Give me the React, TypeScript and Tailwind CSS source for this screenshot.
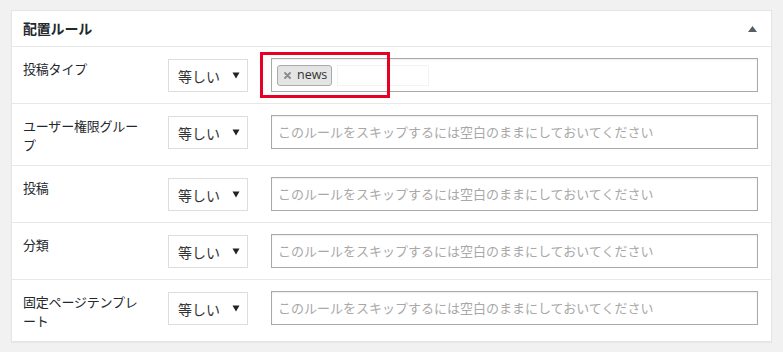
import React from "react";

const JP = "font-['Noto_Sans_CJK_JP','Noto_Sans',sans-serif]";
const PH = "このルールをスキップするには空白のままにしておいてください";

function Select() {
  return (
    <div className="mt-[1px] flex h-[33px] w-[80px] shrink-0 items-center justify-between border border-[#dddddd] bg-white pl-[9px] pr-[6px]">
      <span className="text-[14px] leading-none text-[#333]">等しい</span>
      <svg width="8" height="7" viewBox="0 0 8 7" className="mr-[1px]">
        <path d="M0.5 0.5 H7.5 L4 6.5 Z" fill="#222" />
      </svg>
    </div>
  );
}

function Row({ label, children }: { label: React.ReactNode; children: React.ReactNode }) {
  return (
    <div className="flex items-start border-t border-[#e8e8e8] pl-[11px] pr-[13px] pt-[11px] pb-[11px]">
      <div className="mt-[2px] w-[145px] shrink-0 pr-[10px] text-[13px] leading-[18.5px] tracking-[-0.2px] text-[#23282d]">
        {label}
      </div>
      <Select />
      <div className="ml-[23px] flex-1">{children}</div>
    </div>
  );
}

function EmptyInput() {
  return (
    <div className="flex h-[34px] items-center border border-[#a9a9a9] bg-white pl-[6px] shadow-[inset_0_1px_2px_rgba(0,0,0,0.07)]">
      <span className="text-[13px] tracking-[0px] text-[#a8a8a8]">{PH}</span>
    </div>
  );
}

export default function App() {
  return (
    <div className={`h-[352px] w-[783px] bg-[#f1f1f1] pl-[11px] pt-[10px] ${JP}`}>
      <div className="w-[761px] border border-[#e5e5e5] bg-white shadow-[0_1px_1px_rgba(0,0,0,0.04)]">
        <div className="flex h-[35px] items-center justify-between pl-[11px] pr-[14px]">
          <span className="text-[14px] font-bold tracking-[-0.2px] text-[#23282d]">配置ルール</span>
          <svg width="9" height="6" viewBox="0 0 9 6">
            <path d="M0 6 L4.5 0 L9 6 Z" fill="#555d66" />
          </svg>
        </div>
        <Row label="投稿タイプ">
          <div className="relative">
            <div className="flex h-[34px] items-center gap-[5px] border border-[#a9a9a9] bg-white pl-[5px] shadow-[inset_0_1px_2px_rgba(0,0,0,0.07)]">
              <div className="flex h-[21px] items-center gap-[6px] rounded-[3px] border border-[#aaaaaa] bg-[#e4e4e4] pl-[6px] pr-[4px]">
                <svg width="7" height="7" viewBox="0 0 7 7">
                  <path d="M1 1 L6 6 M6 1 L1 6" stroke="#8a8a8a" strokeWidth="1.8" strokeLinecap="round" />
                </svg>
                <span className="font-['Open_Sans',sans-serif] text-[12.5px] leading-none text-[#333]">news</span>
              </div>
              <div className="h-[21px] w-[92px] border border-[#f3f3f3] bg-white" />
            </div>
            <div className="pointer-events-none absolute left-[-11px] top-[-6px] h-[46px] w-[130px] border-[3px] border-[#e60023]" />
          </div>
        </Row>
        <Row label={<>ユーザー権限グルー<br />プ</>}>
          <EmptyInput />
        </Row>
        <Row label="投稿">
          <EmptyInput />
        </Row>
        <Row label="分類">
          <EmptyInput />
        </Row>
        <Row label={<>固定ページテンプレ<br />ート</>}>
          <EmptyInput />
        </Row>
      </div>
    </div>
  );
}
